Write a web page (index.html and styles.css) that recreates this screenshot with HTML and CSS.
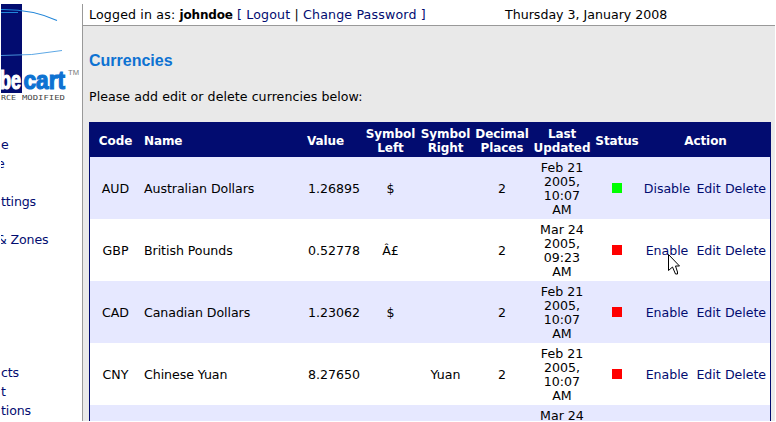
FILE: index.html
```
<!DOCTYPE html>
<html lang="en">
<head>
<meta charset="utf-8">
<title>Currencies</title>
<link rel="stylesheet" href="styles.css">
</head>
<body>
<div class="page">
  <aside class="sidebar">
    <svg class="logo" width="81" height="101" viewBox="1 0 81 101">
      <rect x="1" y="0" width="21" height="89" fill="#020c70"/>
      <path d="M1 5.500Q32 5 57 16.500M1 8.500H18" fill="none" stroke="#2185d8" stroke-width="1.100"/>
      <path d="M1 51.500Q32 52 62 46.500" fill="none" stroke="#4c9ee2" stroke-width=".9"/>
      <text class="word be" x="0" y="85" textLength="21" lengthAdjust="spacingAndGlyphs">be</text>
      <text class="word cart" x="23.500" y="85" textLength="41.500" lengthAdjust="spacingAndGlyphs">cart</text>
      <text class="tm" x="68" y="71" textLength="11" lengthAdjust="spacingAndGlyphs">TM</text>
      <text class="tag" x="1" y="96" textLength="15" lengthAdjust="spacingAndGlyphs">RCE</text>
      <text class="tag" x="22" y="96" textLength="43" lengthAdjust="spacingAndGlyphs">MODIFIED</text>
    </svg>
    <nav class="menu">
      <a>e</a><a class="cut">e</a><a></a><a>ttings</a><a></a><a class="cut">&amp; Zones</a><a></a><a></a><a></a><a></a><a></a><a></a><a>cts</a><a>t</a><a>tions</a>
    </nav>
  </aside>
  <main class="main">
    <header class="topbar">
      <div class="login">Logged in as: <b>johndoe</b> <a>[ Logout</a> | <a>Change Password ]</a></div>
      <div class="date">Thursday 3, January 2008</div>
    </header>
    <section class="content">
      <h1>Currencies</h1>
      <p>Please add edit or delete currencies below:</p>
      <table>
        <colgroup><col class="c-code"><col class="c-name"><col class="c-value"><col class="c-sym"><col class="c-sym"><col class="c-dec"><col class="c-upd"><col class="c-stat"><col class="c-act"></colgroup>
        <thead><tr><th>Code</th><th class="l">Name</th><th class="l">Value</th><th>Symbol<br>Left</th><th>Symbol<br>Right</th><th>Decimal<br>Places</th><th>Last<br>Updated</th><th>Status</th><th>Action</th></tr></thead>
        <tbody>
          <tr><td>AUD</td><td class="l">Australian Dollars</td><td class="r">1.26895</td><td>$</td><td></td><td>2</td><td>Feb 21<br>2005,<br>10:07<br>AM</td><td><i class="dot on"></i></td><td><div class="actions"><a>Disable</a><a>Edit</a><a>Delete</a></div></td></tr>
          <tr><td>GBP</td><td class="l">British Pounds</td><td class="r">0.52778</td><td>Â£</td><td></td><td>2</td><td>Mar 24<br>2005,<br>09:23<br>AM</td><td><i class="dot"></i></td><td><div class="actions"><a>Enable</a><a>Edit</a><a>Delete</a></div></td></tr>
          <tr><td>CAD</td><td class="l">Canadian Dollars</td><td class="r">1.23062</td><td>$</td><td></td><td>2</td><td>Feb 21<br>2005,<br>10:07<br>AM</td><td><i class="dot"></i></td><td><div class="actions"><a>Enable</a><a>Edit</a><a>Delete</a></div></td></tr>
          <tr><td>CNY</td><td class="l">Chinese Yuan</td><td class="r">8.27650</td><td></td><td>Yuan</td><td>2</td><td>Feb 21<br>2005,<br>10:07<br>AM</td><td><i class="dot"></i></td><td><div class="actions"><a>Enable</a><a>Edit</a><a>Delete</a></div></td></tr>
          <tr><td></td><td></td><td></td><td></td><td></td><td></td><td>Mar 24<br><br><br><br></td><td></td><td></td></tr>
        </tbody>
      </table>
    </section>
  </main>
</div>
<svg class="cursor" width="13" height="22" viewBox="0 0 13 22"><path d="M.5 .5V16.500L4.500 13L7.500 20H9.500V18L7.500 12H11.500Z" fill="#fff" stroke="#000"/></svg>
</body>
</html>
```

FILE: styles.css
```
* { box-sizing: border-box; }
body {
  margin: 0;
  padding: 4px 1px 1px;
  height: 422px;
  overflow: hidden;
  background: #fff;
  color: #000;
  font: 12.6px/14px Verdana, "DejaVu Sans", sans-serif;
}
.page { display: flex; height: 417px; overflow: hidden; }
.sidebar { width: 81px; flex: none; overflow: hidden; }
.logo { display: block; }
.word { font: bold 25px Impact, "Liberation Sans Narrow", "Liberation Sans", sans-serif; stroke-width: 1.2px; }
.be { fill: #fff; stroke: #fff; }
.cart { fill: #0d72d2; stroke: #0d72d2; }
.tm { font: 7px/8px "Liberation Sans", sans-serif; fill: #777; }
.tag { font: 7px/8px "DejaVu Sans Mono", monospace; fill: #444; }
a { color: #020c70; }
.menu { padding-top: 30px; letter-spacing: -.15px; }
.menu a { display: block; height: 19px; line-height: 19px; white-space: nowrap; }
.menu .cut { margin-left: -4px; }
.main { flex: 1; border-left: 1px solid #999; background: #e9e9e9; }
.topbar {
  display: flex;
  height: 22px;
  padding: 4px 0 0 6px;
  background: #fff;
  border-bottom: 1px solid #999;
  white-space: nowrap;
}
.login { width: 416px; letter-spacing: .16px; }
.login b { font-size: 12px; letter-spacing: -.15px; }
.content { padding: 0 4px 0 6px; }
h1 { margin: 25px 0 0; font: bold 16px/20px Arial, "Liberation Sans", sans-serif; color: #0d72d2; }
p { margin: 19px 0 18px; letter-spacing: .05px; }
table { width: 682px; table-layout: fixed; border-collapse: separate; border-spacing: 0; border: solid #020c70; border-width: 0 1px; }
.c-code { width: 51px; }
.c-name { width: 163px; }
.c-value { width: 59px; }
.c-sym { width: 55px; }
.c-dec { width: 58px; }
.c-upd { width: 62px; }
.c-stat { width: 48px; }
.c-act { width: 129px; }
th, td { padding: 0; text-align: center; vertical-align: middle; white-space: nowrap; }
th { height: 35px; padding-top: 2px; background: #020c70; color: #fff; font-size: 12px; letter-spacing: -.1px; }
td { height: 62px; padding-top: 2px; background: #fff; }
tr:nth-child(odd) td { background: #e6e8ff; }
.l { text-align: left; padding-left: 3px; }
td.l { letter-spacing: -.07px; }
.r { text-align: right; padding-right: 3px; }
.dot { display: block; width: 10px; height: 10px; margin: -2px auto 0; background: #f00; }
.on { background: #0f0; }
.actions { display: grid; grid-template-columns: 52px 31px 43px; letter-spacing: -.05px; }
.cursor { position: absolute; left: 668px; top: 254px; }
```
